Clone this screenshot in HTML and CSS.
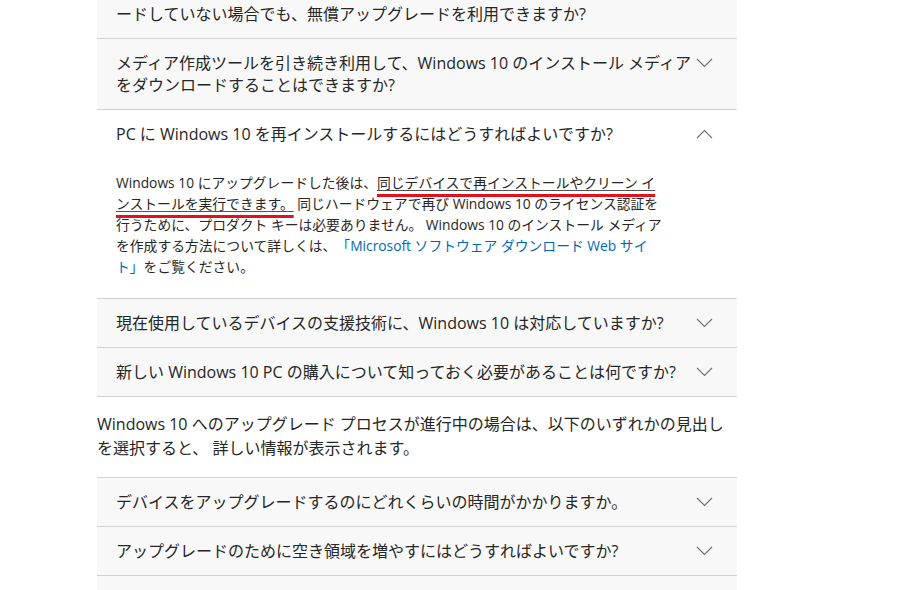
FILE: index.html
```html
<!DOCTYPE html>
<html lang="ja">
<head>
    <meta charset="UTF-8">
    <meta name="viewport" content="width=device-width, initial-scale=1.0">
    <title>Windows 10 のよく寄せられる質問</title>
    <link rel="stylesheet" href="styles.css">
</head>
<body>
    <div class="page">
        <div class="faq">
            <div class="faq-item">
                <div class="faq-head">
                    <span class="faq-title">Windows 7 または Windows 8.1 から Windows 10 にアップグレ<br>ードしていない場合でも、無償アップグレードを利用できますか?</span>
                    <svg class="chev" width="17" height="10" viewBox="0 0 17 10"><polyline points="1,1 8.5,8.5 16,1"/></svg>
                </div>
            </div>
            <div class="faq-item">
                <div class="faq-head">
                    <span class="faq-title">メディア作成ツールを引き続き利用して、Windows 10 のインストール メディアをダウンロードすることはできますか?</span>
                    <svg class="chev" width="17" height="10" viewBox="0 0 17 10"><polyline points="1,1 8.5,8.5 16,1"/></svg>
                </div>
            </div>
            <div class="faq-item open">
                <div class="faq-head">
                    <span class="faq-title">PC に Windows 10 を再インストールするにはどうすればよいですか?</span>
                    <svg class="chev" width="17" height="10" viewBox="0 0 17 10"><polyline points="1,9 8.5,1.5 16,9"/></svg>
                </div>
                <div class="faq-body">
                    Windows 10 にアップグレードした後は、<span class="mark"><span class="uline">同じデバイスで再インストールやクリーン インストールを実行できます。</span></span> 同じハードウェアで再び Windows 10 のライセンス認証を行うために、プロダクト キーは必要ありません。 Windows 10 のインストール メディアを作成する方法について詳しくは、<wbr><a class="link" href="#">「Microsoft ソフトウェア ダウンロード Web サイト」</a>をご覧ください。
                </div>
            </div>
            <div class="faq-item">
                <div class="faq-head">
                    <span class="faq-title">現在使用しているデバイスの支援技術に、Windows 10 は対応していますか?</span>
                    <svg class="chev" width="17" height="10" viewBox="0 0 17 10"><polyline points="1,1 8.5,8.5 16,1"/></svg>
                </div>
            </div>
            <div class="faq-item">
                <div class="faq-head">
                    <span class="faq-title">新しい Windows 10 PC の購入について知っておく必要があることは何ですか?</span>
                    <svg class="chev" width="17" height="10" viewBox="0 0 17 10"><polyline points="1,1 8.5,8.5 16,1"/></svg>
                </div>
            </div>
        </div>

        <p class="note">Windows 10 へのアップグレード プロセスが進行中の場合は、以下のいずれかの見出しを選択すると、 詳しい情報が表示されます。</p>

        <div class="faq faq-second">
            <div class="faq-item">
                <div class="faq-head">
                    <span class="faq-title">デバイスをアップグレードするのにどれくらいの時間がかかりますか。</span>
                    <svg class="chev" width="17" height="10" viewBox="0 0 17 10"><polyline points="1,1 8.5,8.5 16,1"/></svg>
                </div>
            </div>
            <div class="faq-item">
                <div class="faq-head">
                    <span class="faq-title">アップグレードのために空き領域を増やすにはどうすればよいですか?</span>
                    <svg class="chev" width="17" height="10" viewBox="0 0 17 10"><polyline points="1,1 8.5,8.5 16,1"/></svg>
                </div>
            </div>
            <div class="faq-item">
                <div class="faq-head">
                    <span class="faq-title">アップグレード後に Windows 10 のライセンス認証を行うにはどうすればよいですか?</span>
                    <svg class="chev" width="17" height="10" viewBox="0 0 17 10"><polyline points="1,1 8.5,8.5 16,1"/></svg>
                </div>
            </div>
        </div>
    </div>
</body>
</html>
```

FILE: styles.css
```css
body {
    margin: 0;
    padding: 0;
    background-color: #fff;
    font-family: "Open Sans", "Noto Sans CJK JP", sans-serif;
    color: #262626;
    overflow: hidden;
    text-spacing-trim: space-all;
}
.page {
    width: 640px;
    margin: -32px 0 0 97px;
}
.faq-item {
    background-color: #f8f8f8;
    border-bottom: 1px solid #d2d2d2;
}
.faq-item.open {
    background-color: #fff;
}
.faq-second {
    border-top: 1px solid #d2d2d2;
}
.faq-head {
    display: flex;
    align-items: flex-start;
    padding: 13px 24px 13px 19px;
    font-size: 16px;
    line-height: 22px;
    cursor: pointer;
}
.faq-title {
    flex-grow: 1;
}
.chev {
    flex-shrink: 0;
    margin: 6px 0 0 4px;
}
.chev polyline {
    fill: none;
    stroke: #707070;
    stroke-width: 1.1;
}
.faq-body {
    padding: 14px 69px 21px 19px;
    font-size: 13.8px;
    line-height: 21px;
}
.mark {
    text-decoration: underline 3px #e1121e;
    text-underline-offset: 6px;
    text-decoration-skip-ink: none;
}
.uline {
    text-decoration: underline 1px #555;
    text-underline-offset: 2px;
}
.link {
    color: #0067b8;
    text-decoration: none;
}
.note {
    margin: 15px 0 17px 0;
    font-size: 16px;
    line-height: 24px;
}
```
